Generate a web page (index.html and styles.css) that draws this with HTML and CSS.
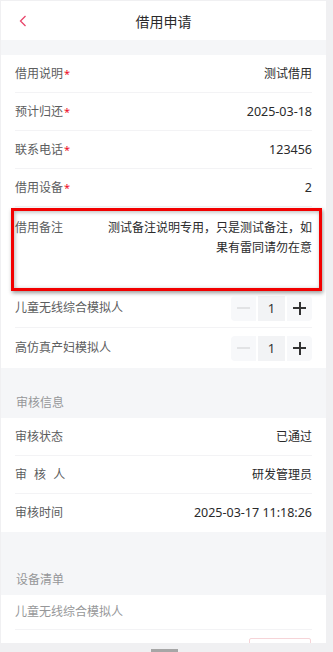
FILE: index.html
```html
<!DOCTYPE html>
<html lang="zh">
<head>
<meta charset="utf-8">
<link rel="stylesheet" href="styles.css">
</head>
<body>
<div class="frame">
  <div class="page">
    <header class="nav">
      <svg class="back" width="8" height="12" viewBox="0 0 8 12"><path d="M6.5 1 L1.5 6 L6.5 11" fill="none" stroke="#e8456b" stroke-width="1.3"/></svg>
      <div class="nav-title">借用申请</div>
    </header>
    <div class="gap"></div>
    <section class="group">
      <div class="row"><span class="label">借用说明<i class="req">*</i></span><span class="value">测试借用</span></div>
      <div class="row"><span class="label">预计归还<i class="req">*</i></span><span class="value digits">2025-03-18</span></div>
      <div class="row"><span class="label">联系电话<i class="req">*</i></span><span class="value digits">123456</span></div>
      <div class="row"><span class="label">借用设备<i class="req">*</i></span><span class="value digits">2</span></div>
      <div class="row remark"><span class="label">借用备注</span><span class="value multi">测试备注说明专用，只是测试备注，如果有雷同请勿在意</span></div>
      <div class="row"><span class="label">儿童无线综合模拟人</span>
        <div class="stepper"><span class="step minus"></span><span class="num">1</span><span class="step plus"></span></div>
      </div>
      <div class="row last"><span class="label">高仿真产妇模拟人</span>
        <div class="stepper"><span class="step minus"></span><span class="num">1</span><span class="step plus"></span></div>
      </div>
    </section>
    <div class="section-title t1">审核信息</div>
    <section class="group">
      <div class="row"><span class="label">审核状态</span><span class="value">已通过</span></div>
      <div class="row"><span class="label spaced">审 核 人</span><span class="value">研发管理员</span></div>
      <div class="row last"><span class="label">审核时间</span><span class="value digits">2025-03-17 11:18:26</span></div>
    </section>
    <div class="section-title t2">设备清单</div>
    <section class="group">
      <div class="row dev"><span class="label muted">儿童无线综合模拟人</span></div>
      <div class="row dev2"><span class="outline-btn"></span></div>
    </section>
  </div>
  <div class="thumb"></div>
</div>
</body>
</html>
```
FILE: styles.css
```css
* { box-sizing: border-box; }
html, body { margin: 0; padding: 0; }
body {
  background: #f0f0f2;
  font-family: "Noto Sans", "Noto Sans CJK SC", sans-serif;
  font-size: 12px;
  width: 333px;
  height: 652px;
  overflow: hidden;
}
.frame {
  position: relative;
  width: 333px;
  height: 652px;
  padding: 1px 7px 0 1px;
}
.page {
  width: 325px;
  height: 642px;
  overflow: hidden;
  background: #f5f6f8;
}
.nav {
  height: 39px;
  background: #fff;
  display: flex;
  align-items: center;
  justify-content: center;
  position: relative;
}
.back { position: absolute; left: 18px; top: 14px; }
.nav-title { font-size: 14px; color: #2a2a2b; }
.gap { height: 15px; }
.group { background: #fff; }
.row {
  margin: 0 14px;
  height: 38px;
  display: flex;
  align-items: center;
  justify-content: space-between;
  border-bottom: 1px solid #f3f3f5;
  line-height: 20px;
}
.row.last { border-bottom: none; }
.label { color: #5c5d5e; white-space: nowrap; }
.label.spaced { word-spacing: 4px; }
.label.muted { color: #969799; }
.req { color: #ee0a24; font-style: normal; margin-left: 1px; font-size: 11px; }
.value { color: #2a2a2b; text-align: right; }
.value.digits { font-size: 12.5px; }
.row.remark {
  position: relative;
  height: 82px;
  align-items: flex-start;
  padding-top: 11px;
  border-bottom: none;
}
.row.remark::after {
  content: "";
  position: absolute;
  left: -4px;
  right: -10px;
  top: 1px;
  height: 77px;
  border: 3px solid #f20000;
  box-shadow: 1px 2px 4px rgba(0,0,0,0.4), inset 1px 1px 4px rgba(0,0,0,0.3);
}
.value.multi { width: 206px; line-height: 20px; }
.row.remark .label { line-height: 20px; }
.row:nth-child(6) { height: 39px; }
.row:nth-child(7) { height: 40px; }
.stepper { display: flex; align-items: center; gap: 2px; }
.step {
  width: 25px;
  height: 25px;
  background: #f7f8fa;
  position: relative;
}
.step.minus { border-radius: 4px 0 0 4px; }
.step.plus { border-radius: 0 4px 4px 0; }
.step::before, .plus::after {
  content: "";
  position: absolute;
  left: 6px;
  top: 11.5px;
  width: 13px;
  height: 2px;
  background: #323233;
}
.minus::before { background: #e2e3e5; }
.plus::after { left: 11.5px; top: 6px; width: 2px; height: 13px; }
.num {
  width: 27px;
  height: 25px;
  background: #f2f3f5;
  color: #323233;
  text-align: center;
  line-height: 25px;
  font-size: 13px;
}
.section-title {
  color: #969799;
  padding: 0 15px 5px;
  line-height: 20px;
  display: flex;
  align-items: flex-end;
}
.t1 { height: 50px; }
.t2 { height: 63px; }
.row.dev { height: 35px; }
.row.dev2 { height: 30px; justify-content: flex-end; align-items: flex-start; padding-top: 8px; border-bottom: none; }
.outline-btn {
  width: 62px;
  height: 30px;
  border: 1px solid #f6d4d8;
  border-radius: 2px;
  margin-right: 1px;
}
.thumb {
  position: absolute;
  left: 151px;
  top: 649px;
  width: 27px;
  height: 3px;
  background: #a6a6a6;
}
```
